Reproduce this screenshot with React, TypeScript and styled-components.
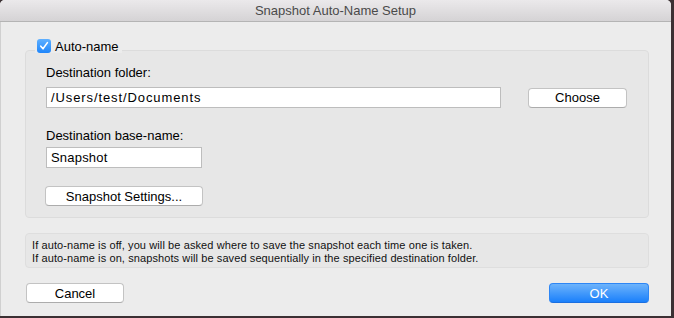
import styled, { createGlobalStyle } from "styled-components";

const GlobalStyle = createGlobalStyle`
  html, body {
    margin: 0;
    padding: 0;
    background: #3b3033;
  }
  body {
    font-family: "Liberation Sans", Arial, sans-serif;
    width: 674px;
    height: 318px;
    overflow: hidden;
  }
`;

const Window = styled.div`
  width: 671px;
  height: 316px;
  background: #ececec;
  border-radius: 5px 5px 0 0;
  overflow: hidden;
  display: flex;
  flex-direction: column;
  box-shadow: inset 1px 0 0 #d0d0d0;
`;

const TitleBar = styled.div`
  height: 22px;
  flex: none;
  box-sizing: border-box;
  border-bottom: 1px solid #b4b4b4;
  background: linear-gradient(#ebe9eb, #d5d3d5);
  display: flex;
  align-items: center;
  justify-content: center;
  font-size: 13px;
  color: #4a4a4a;
`;

const Content = styled.div`
  display: flex;
  flex-direction: column;
  padding: 17px 22px 0 25px;
`;

const Legend = styled.label`
  position: relative;
  align-self: flex-start;
  margin-left: 10px;
  margin-bottom: -3px;
  padding: 0 3px 0 2px;
  height: 14px;
  display: flex;
  align-items: center;
  gap: 4px;
  background: #ececec;
  font-size: 13px;
  color: #000;
`;

const Check = styled.span`
  width: 14px;
  height: 14px;
  border-radius: 3px;
  background: linear-gradient(#5fb0ff, #1f86fb);
  display: flex;
  align-items: center;
  justify-content: center;
`;

const GroupBox = styled.div`
  height: 168px;
  box-sizing: border-box;
  border: 1px solid #dcdcdc;
  border-radius: 4px;
  background: #e7e7e7;
  padding: 14px 20px 0 20px;
  display: flex;
  flex-direction: column;
`;

const FieldLabel = styled.div<{ $gap?: number }>`
  font-size: 13px;
  line-height: 16px;
  color: #000;
  margin-top: ${({ $gap }) => $gap ?? 0}px;
`;

const Row = styled.div<{ $top?: number; $shift?: number }>`
  display: flex;
  align-items: center;
  gap: 27px;
  margin-top: ${({ $top }) => $top ?? 6}px;
  margin-left: ${({ $shift }) => $shift ?? 0}px;
`;

const TextField = styled.div<{ $width: number; $wide?: boolean }>`
  width: ${({ $width }) => $width}px;
  height: 21px;
  box-sizing: border-box;
  border: 1px solid #bdbdbd;
  background: #fff;
  padding: 0 4px;
  display: flex;
  align-items: center;
  font-size: 13px;
  letter-spacing: ${({ $wide }) => ($wide ? "0.9px" : "0.2px")};
  color: #000;
`;

const Button = styled.button<{ $width: number; $primary?: boolean }>`
  width: ${({ $width }) => $width}px;
  height: 20px;
  box-sizing: border-box;
  padding: 0;
  border-radius: 4px;
  font-family: "Liberation Sans", Arial, sans-serif;
  font-size: 13px;
  border: 1px solid ${({ $primary }) => ($primary ? "#2d86f5" : "#c3c3c3")};
  border-bottom-color: ${({ $primary }) => ($primary ? "#1a6fe0" : "#acacac")};
  background: ${({ $primary }) =>
    $primary ? "linear-gradient(#6db3fb, #1a80fb)" : "#ffffff"};
  color: ${({ $primary }) => ($primary ? "#ffffff" : "#000")};
`;

const InfoBox = styled.div`
  margin-top: 15px;
  height: 35px;
  box-sizing: border-box;
  border: 1px solid #dedede;
  border-radius: 4px;
  background: #e7e7e7;
  padding: 5px 6px 0;
  font-size: 11px;
  line-height: 13px;
  letter-spacing: 0.1px;
  color: #111;
`;

const Footer = styled.div`
  display: flex;
  justify-content: space-between;
  margin-top: 15px;
  padding-left: 1px;
`;

export default function App() {
  return (
    <>
      <GlobalStyle />
      <Window>
        <TitleBar>Snapshot Auto-Name Setup</TitleBar>
        <Content>
          <Legend>
            <Check>
              <svg width="10" height="10" viewBox="0 0 10 10">
                <path
                  d="M1.8 5.2 L4 7.8 L8.4 1.6"
                  fill="none"
                  stroke="#fff"
                  strokeWidth="1.6"
                  strokeLinecap="round"
                  strokeLinejoin="round"
                />
              </svg>
            </Check>
            Auto-name
          </Legend>
          <GroupBox>
            <FieldLabel>Destination folder:</FieldLabel>
            <Row>
              <TextField $width={455} $wide>
                /Users/test/Documents
              </TextField>
              <Button $width={99}>Choose</Button>
            </Row>
            <FieldLabel $gap={20}>Destination base-name:</FieldLabel>
            <Row $top={3}>
              <TextField $width={156}>Snapshot</TextField>
            </Row>
            <Row $top={18} $shift={-1}>
              <Button $width={158}>Snapshot Settings...</Button>
            </Row>
          </GroupBox>
          <InfoBox>
            If auto-name is off, you will be asked where to save the snapshot each time one is taken.
            <br />
            If auto-name is on, snapshots will be saved sequentially in the specified destination folder.
          </InfoBox>
          <Footer>
            <Button $width={98}>Cancel</Button>
            <Button $width={100} $primary>
              OK
            </Button>
          </Footer>
        </Content>
      </Window>
    </>
  );
}
